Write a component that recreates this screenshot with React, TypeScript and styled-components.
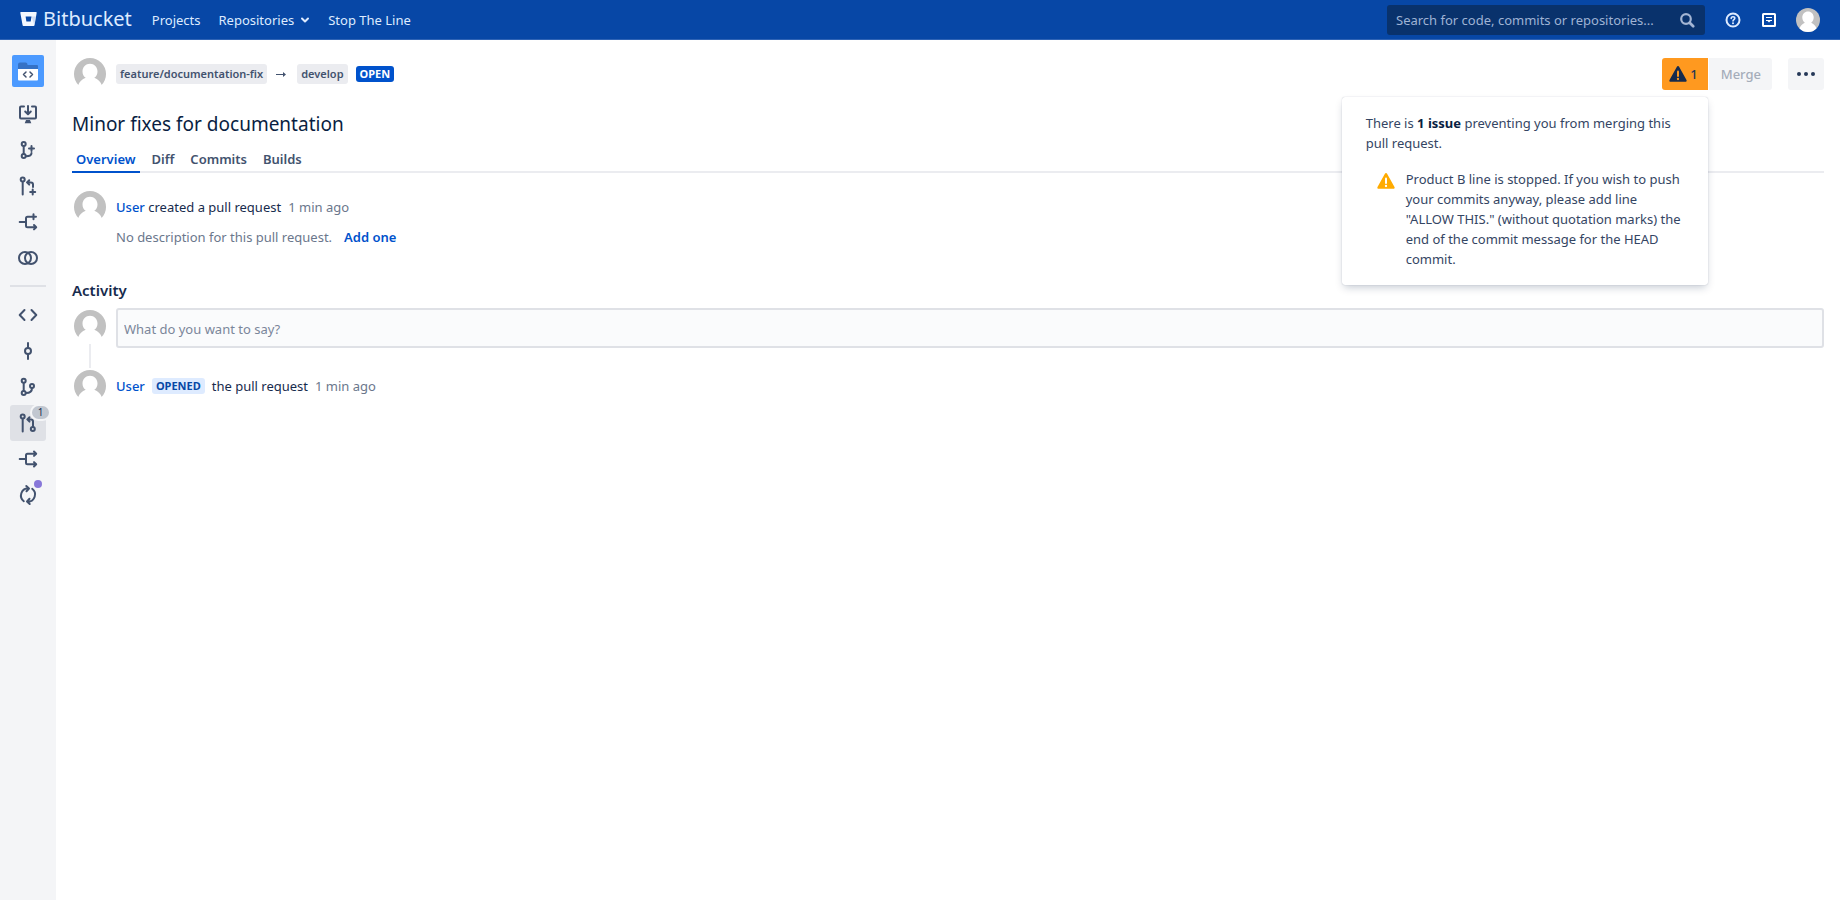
import React from "react";
import styled, { createGlobalStyle, css } from "styled-components";

const GlobalStyle = createGlobalStyle`
  *, *::before, *::after { box-sizing: border-box; }
  body {
    margin: 0;
    background: #ffffff;
    color: #172b4d;
    font-family: "Noto Sans", "Open Sans", sans-serif;
    font-size: 13px;
    line-height: 20px;
  }
  a { color: #0052cc; text-decoration: none; }
  h1, h2, p, ul { margin: 0; padding: 0; }
  ul { list-style: none; }
  button, input { font: inherit; color: inherit; }
  svg { display: block; flex: none; }
`;

/* ---------- App header ---------- */

const TopBar = styled.header`
  display: flex;
  align-items: center;
  height: 40px;
  padding: 0 20px;
  background: #0747a6;
  border-bottom: 1px solid #2e63b5;
  color: #deebff;
`;

const Brand = styled.a`
  display: flex;
  align-items: center;
  gap: 6px;
  margin-right: 20px;
  padding-bottom: 2px;
  color: #deebff;
  font-size: 20px;
  line-height: 24px;
`;

const TopNav = styled.nav`
  display: flex;
  flex: 1;
  align-items: center;
  gap: 18px;
`;

const TopLink = styled.a`
  display: flex;
  align-items: center;
  gap: 6px;
  color: #deebff;
`;

const SearchForm = styled.form`
  display: flex;
  align-items: center;
  width: 318px;
  height: 30px;
  padding: 0 9px;
  border-radius: 3px;
  background: #09326c;
`;

const SearchInput = styled.input`
  flex: 1;
  min-width: 0;
  padding: 0;
  border: 0;
  outline: 0;
  background: transparent;
  &::placeholder { color: #9fb3d4; opacity: 1; }
`;

const IconButton = styled.button`
  display: flex;
  align-items: center;
  justify-content: center;
  padding: 0;
  border: 0;
  background: transparent;
  cursor: pointer;
`;

const Tools = styled.div`
  display: flex;
  align-items: center;
  gap: 12px;
  margin-left: 16px;
`;

const AccountButton = styled(IconButton)`
  margin-left: 3px;
`;

/* ---------- Sidebar ---------- */

const Shell = styled.div`
  display: flex;
  min-height: calc(100vh - 40px);
`;

const Sidebar = styled.nav`
  display: flex;
  flex: none;
  flex-direction: column;
  align-items: center;
  width: 56px;
  padding-top: 15px;
  background: #f4f5f7;
`;

const ProjectTile = styled.a`
  display: flex;
  margin-bottom: 9px;
  border-radius: 2px;
  overflow: hidden;
`;

const SideLink = styled.a<{ $selected?: boolean }>`
  position: relative;
  display: flex;
  align-items: center;
  justify-content: center;
  width: 36px;
  height: 36px;
  border-radius: 3px;
  color: #42526e;
  ${({ $selected }) => $selected && css`background: #dfe1e6;`}
`;

const SideDivider = styled.hr`
  width: 36px;
  height: 2px;
  margin: 9px 0 10px;
  border: 0;
  background: #dfe1e6;
`;

const CountBadge = styled.span`
  position: absolute;
  top: -1px;
  right: -5px;
  width: 21px;
  height: 17px;
  border: 2px solid #f4f5f7;
  border-radius: 9px;
  background: #c1c7d0;
  color: #172b4d;
  font-size: 10px;
  line-height: 13px;
  text-align: center;
`;

const NewDot = styled.span`
  position: absolute;
  top: 3px;
  right: 4px;
  width: 8px;
  height: 8px;
  border-radius: 50%;
  background: #8777d9;
`;

/* ---------- Pull request ---------- */

const Main = styled.main`
  flex: 1;
  min-width: 0;
  padding: 18px 16px 24px;
`;

const PullRequestBar = styled.div`
  display: flex;
  align-items: center;
  gap: 8px;
  padding-left: 2px;
`;

const Branch = styled.a`
  margin-left: 2px;
  padding: 0 4px;
  border-radius: 3px;
  background: #ebecf0;
  color: #42526e;
  font-size: 11px;
  font-weight: 600;
`;

const Lozenge = styled.span<{ $subtle?: boolean }>`
  padding: 0 4px;
  border-radius: 3px;
  background: ${({ $subtle }) => ($subtle ? "#deebff" : "#0052cc")};
  color: ${({ $subtle }) => ($subtle ? "#0747a6" : "#ffffff")};
  font-size: 11px;
  font-weight: 700;
  line-height: 16px;
`;

const Actions = styled.div`
  display: flex;
  gap: 1px;
  margin-left: auto;
`;

const ActionButton = styled.button<{ $warning?: boolean }>`
  display: flex;
  align-items: center;
  gap: 2px;
  height: 32px;
  padding: 0 ${({ $warning }) => ($warning ? 10 : 11)}px 0 ${({ $warning }) => ($warning ? 6 : 12)}px;
  border: 0;
  border-radius: ${({ $warning }) => ($warning ? "3px 0 0 3px" : "3px")};
  background: ${({ $warning }) => ($warning ? "#ff991f" : "#f4f5f7")};
  color: #253858;
  font-weight: 500;
  &:disabled { border-radius: 0 3px 3px 0; color: #a5adba; }
`;

const MoreButton = styled(ActionButton)`
  justify-content: center;
  width: 36px;
  margin-left: 15px;
  padding: 0;
`;

const VetoAnchor = styled.div`
  position: relative;
`;

const VetoPopover = styled.div`
  position: absolute;
  top: calc(100% + 7px);
  right: 0;
  z-index: 2;
  width: 366px;
  padding: 16px 20px 16px 24px;
  border-radius: 3px;
  background: #ffffff;
  box-shadow: 0 4px 8px -2px rgba(9, 30, 66, 0.25), 0 0 1px rgba(9, 30, 66, 0.31);
  color: #344563;
  strong { color: #091e42; font-weight: 700; }
`;

const VetoItem = styled.li`
  display: flex;
  gap: 10px;
  margin-top: 16px;
  padding-left: 10px;
  svg { margin-top: 2px; }
`;

const Title = styled.h1`
  margin-top: 22px;
  font-size: 19px;
  font-weight: 400;
  line-height: 24px;
  color: #091e42;
`;

const Tabs = styled.nav`
  display: flex;
  gap: 8px;
  margin-top: 13px;
  border-bottom: 2px solid #ebecf0;
`;

const Tab = styled.a<{ $active?: boolean }>`
  margin-bottom: -2px;
  padding: 0 4px 2px;
  border-bottom: 2px solid ${({ $active }) => ($active ? "#0052cc" : "transparent")};
  color: ${({ $active }) => ($active ? "#0052cc" : "#42526e")};
  font-weight: 600;
`;

const Entry = styled.div`
  display: flex;
  align-items: center;
  gap: 10px;
  padding-left: 2px;
`;

const Created = styled(Entry)`
  margin-top: 18px;
`;

const EntryText = styled.p`
  display: flex;
  flex-wrap: wrap;
  align-items: center;
  gap: 7px;
`;

const UserLink = styled.a`
  font-weight: 500;
`;

const Muted = styled.span`
  color: #6b778c;
`;

const Description = styled.p`
  display: flex;
  gap: 12px;
  margin: 4px 0 0 44px;
  a { font-weight: 600; }
`;

const SectionTitle = styled.h2`
  margin: 33px 0 8px;
  font-size: 15px;
  font-weight: 600;
  line-height: 20px;
`;

const CommentInput = styled.input`
  flex: 1;
  min-width: 0;
  height: 40px;
  padding: 2px 6px 0;
  border: 2px solid #dfe1e6;
  border-radius: 3px;
  background: #fafbfc;
  &::placeholder { color: #7a869a; opacity: 1; }
`;

const CommentEntry = styled(Entry)`
  align-items: flex-start;
`;

const AvatarThread = styled.div`
  display: flex;
  flex-direction: column;
  align-items: center;
  gap: 2px;
  padding-top: 2px;
  margin-bottom: 2px;
  &::after { content: ""; width: 2px; height: 24px; background: #ebecf0; }
`;

/* ---------- Drawings ---------- */

const Avatar = ({ size = 32, filled = false }: { size?: number; filled?: boolean }) => (
  <svg width={size} height={size} viewBox="0 0 32 32" role="img" aria-label="User">
    <circle cx="16" cy="16" r="16" fill="#c1c1c1" />
    <path
      fill="#ffffff"
      d={
        filled
          ? "M16 4.500c-4.300 0-7.600 3.500-7.600 8 0 3 1.300 5.600 3.400 7C8.500 20.800 6 23.500 4.700 27.300A16 16 0 0 0 27.300 27.300C26 23.500 23.500 20.800 20.200 19.500c2.100-1.400 3.400-4 3.400-7 0-4.500-3.300-8-7.600-8z"
          : "M16 5.800c-4.200 0-7.500 3.400-7.500 7.600 0 2.800 1.200 5 3.200 6.300C8 21 5.500 23.500 4 27.500V33h24v-5.500c-1.500-4-4-6.500-7.700-7.800 2-1.300 3.200-3.500 3.200-6.300 0-4.200-3.300-7.600-7.500-7.600z"
      }
    />
  </svg>
);

const Glyph = ({ children }: { children: React.ReactNode }) => (
  <svg width="24" height="24" viewBox="0 0 24 24" fill="none" stroke="currentColor" strokeWidth="2" strokeLinecap="round" strokeLinejoin="round" aria-hidden="true">
    {children}
  </svg>
);

const WarningTriangle = ({ fill, mark }: { fill: string; mark: string }) => (
  <svg width="20" height="20" viewBox="0 0 20 20" aria-hidden="true">
    <path d="M8.900 2.700a1.250 1.250 0 0 1 2.200 0l7.400 13.300c.5.900-.1 1.800-1 1.800H2.500c-.9 0-1.500-.9-1-1.800z" fill={fill} />
    <path d="M10 7.500v4.500" stroke={mark} strokeWidth="2" strokeLinecap="round" />
    <circle cx="10" cy="15" r="1.150" fill={mark} />
  </svg>
);

const createLinks = [
  { label: "Clone", icon: <><path d="M8 4.500H5a1 1 0 0 0-1 1v10a1 1 0 0 0 1 1h14a1 1 0 0 0 1-1v-10a1 1 0 0 0-1-1h-3M12 4v8M9.200 9.500L12 12.300l2.800-2.800" /><path d="M10 18h4l1.300 3.200H8.700z" fill="currentColor" stroke="none" /></> },
  { label: "Create branch", icon: <><circle cx="7.700" cy="6" r="2" /><circle cx="7.700" cy="18" r="2" /><path d="M7.700 8v8M10 18.200c4 0 5.500-1 5.500-3.200M15.500 8v5M13 10.500h5" /></> },
  { label: "Create pull request", icon: <><circle cx="6.700" cy="5.500" r="2" /><path d="M6.700 8v12.500M13.200 6.200L11 8.400l2.200 2.200M11.500 8.400H15c1.500 0 2 .7 2 2V13M16.700 15.500v5M14.200 18h5" /></> },
  { label: "Create fork", icon: <><path d="M3.700 12H10M14 6.700h-2.500A1.500 1.500 0 0 0 10 8.200v7.500a1.500 1.500 0 0 0 1.500 1.500h8.500M18 15l2.200 2.200L18 19.400M17.500 4.300v5M15 6.800h5" /></> },
  { label: "Compare", icon: <><circle cx="9" cy="12" r="6" /><circle cx="15" cy="12" r="6" /></> },
];

const browseLinks = [
  { label: "Source", icon: <path d="M8.500 7l-4.800 5 4.800 5M15.500 7l4.800 5-4.800 5" /> },
  { label: "Commits", icon: <><circle cx="12" cy="12" r="3" /><path d="M12 4v5M12 15v5" /></> },
  { label: "Branches", icon: <><circle cx="7.700" cy="5.700" r="2" /><circle cx="7.700" cy="18" r="2" /><circle cx="16" cy="11" r="2" /><path d="M7.700 8v8M16 13c0 3.500-2 5-6 5" /></> },
  { label: "Pull requests", count: 1, icon: <><circle cx="6.700" cy="5.500" r="2" /><circle cx="16.800" cy="18" r="2" /><path d="M6.700 8v12.500M13.500 6.200l-2.200 2.200 2.200 2.200M11.700 8.400H15c1.500 0 2 .7 2 2V16" /></> },
  { label: "Forks", icon: <path d="M3.700 12H10M20 6.700h-8.500A1.500 1.500 0 0 0 10 8.200v7.600a1.500 1.500 0 0 0 1.500 1.500H20M18 4.500l2.200 2.200L18 8.900M18 15.100l2.200 2.200-2.200 2.200" /> },
  { label: "Builds", dot: true, icon: <path d="M7.800 18.200A7.200 7.200 0 0 1 12 5.300M10.300 3l2.700 2.500-2.500 2.700M16.200 5.800A7.200 7.200 0 0 1 12 18.700M13.700 21L11 18.500l2.500-2.700" /> },
];

export default function App() {
  return (
    <>
      <GlobalStyle />
      <TopBar>
        <Brand href="#">
          <svg width="17" height="16" viewBox="0 0 17 16" aria-hidden="true">
            <path d="M1 1h15a.7.7 0 0 1 .7.8l-2.200 12.400a.9.9 0 0 1-.9.800H3.500a.9.9 0 0 1-.9-.8L.3 1.800A.7.7 0 0 1 1 1z" fill="#f4f8ff" />
            <path d="M5.600 5.500h5.900l-.8 5H6.400z" fill="#0747a6" />
            <path d="M11.500 5.500h4.400l-1.500 8.500z" fill="#a9c2ea" opacity=".5" />
          </svg>
          Bitbucket
        </Brand>
        <TopNav aria-label="Main">
          <TopLink href="#">Projects</TopLink>
          <TopLink href="#">
            Repositories
            <svg width="10" height="8" viewBox="0 0 10 8" fill="none" stroke="currentColor" strokeWidth="2" strokeLinecap="round" strokeLinejoin="round" aria-hidden="true">
              <path d="M2 2.500l3 3 3-3" />
            </svg>
          </TopLink>
          <TopLink href="#">Stop The Line</TopLink>
        </TopNav>
        <SearchForm role="search">
          <SearchInput type="text" aria-label="Search" placeholder="Search for code, commits or repositories..." />
          <IconButton type="button" aria-label="Submit search">
            <svg width="18" height="18" viewBox="0 0 18 18" fill="none" stroke="#a3b5d3" aria-hidden="true">
              <circle cx="8" cy="8" r="4.800" strokeWidth="2.200" />
              <path d="M11.700 11.700l3.500 3.500" strokeWidth="2.800" strokeLinecap="round" />
            </svg>
          </IconButton>
        </SearchForm>
        <Tools>
          <IconButton type="button" aria-label="Help">
            <svg width="24" height="24" viewBox="0 0 24 24" fill="none" stroke="#deebff" aria-hidden="true">
              <circle cx="12" cy="12" r="6.500" strokeWidth="2" />
              <path d="M10.200 10.500c0-1.100.8-1.800 1.800-1.800s1.800.7 1.800 1.600c0 1.200-1.800 1.300-1.800 2.600" strokeWidth="1.600" strokeLinecap="round" />
              <circle cx="12" cy="15.200" r="1" fill="#deebff" stroke="none" />
            </svg>
          </IconButton>
          <IconButton type="button" aria-label="Feedback">
            <svg width="24" height="24" viewBox="0 0 24 24" fill="none" stroke="#ffffff" aria-hidden="true">
              <rect x="6" y="6" width="12" height="12" rx=".5" strokeWidth="2" />
              <path d="M9 9.500h6M9 12.500h6" strokeWidth="1" />
              <path d="M10.500 13h3L12 14.500z" fill="#ffffff" stroke="none" />
            </svg>
          </IconButton>
          <AccountButton type="button" aria-label="Your account">
            <Avatar size={24} filled />
          </AccountButton>
        </Tools>
      </TopBar>

      <Shell>
        <Sidebar aria-label="Repository">
          <ProjectTile href="#" aria-label="Repository home">
            <svg width="32" height="32" viewBox="0 0 32 32" aria-hidden="true">
              <rect width="32" height="32" fill="#4c9aff" />
              <path d="M6 9.500a2 2 0 0 1 2-2h5.500a2 2 0 0 1 2 2v.5H25a1 1 0 0 1 1 1v4H6z" fill="#3572c6" />
              <path d="M6 14h20v10.500a1 1 0 0 1-1 1H7a1 1 0 0 1-1-1z" fill="#ffffff" />
              <path d="M14 17l-2.500 2.500L14 22M18 17l2.500 2.500L18 22" fill="none" stroke="#42526e" strokeWidth="1.500" strokeLinecap="round" strokeLinejoin="round" />
            </svg>
          </ProjectTile>
          {createLinks.map((l) => (
            <SideLink key={l.label} href="#" aria-label={l.label}>
              <Glyph>{l.icon}</Glyph>
            </SideLink>
          ))}
          <SideDivider />
          {browseLinks.map((l) => (
            <SideLink key={l.label} href="#" aria-label={l.label} $selected={!!l.count}>
              <Glyph>{l.icon}</Glyph>
              {l.count && <CountBadge>{l.count}</CountBadge>}
              {l.dot && <NewDot />}
            </SideLink>
          ))}
        </Sidebar>

        <Main>
          <PullRequestBar>
            <Avatar />
            <Branch href="#">feature/documentation-fix</Branch>
            <svg width="12" height="12" viewBox="0 0 12 12" fill="none" stroke="#42526e" aria-hidden="true">
              <path d="M1 6.500h9" />
              <path d="M8 4L11 6.500 8 9z" fill="#42526e" stroke="none" />
            </svg>
            <Branch href="#">develop</Branch>
            <Lozenge>OPEN</Lozenge>
            <Actions>
              <VetoAnchor>
                <ActionButton type="button" $warning aria-label="1 merge issue" aria-expanded="true">
                  <WarningTriangle fill="#172b4d" mark="#ff991f" />1
                </ActionButton>
                <VetoPopover role="dialog" aria-label="Merge issues">
                  <p>There is <strong>1 issue</strong> preventing you from merging this pull request.</p>
                  <ul>
                    <VetoItem>
                      <WarningTriangle fill="#ffab00" mark="#ffffff" />
                      <p>
                        Product B line is stopped. If you wish to push your commits anyway, please add line
                        "ALLOW THIS." (without quotation marks) the end of the commit message for the HEAD commit.
                      </p>
                    </VetoItem>
                  </ul>
                </VetoPopover>
              </VetoAnchor>
              <ActionButton type="button" disabled>Merge</ActionButton>
              <MoreButton type="button" aria-label="More actions">
                <svg width="20" height="6" viewBox="0 0 20 6" fill="#253858" aria-hidden="true">
                  <circle cx="3" cy="3" r="2" />
                  <circle cx="10" cy="3" r="2" />
                  <circle cx="17" cy="3" r="2" />
                </svg>
              </MoreButton>
            </Actions>
          </PullRequestBar>

          <Title>Minor fixes for documentation</Title>
          <Tabs aria-label="Pull request">
            <Tab href="#" $active>Overview</Tab>
            <Tab href="#">Diff</Tab>
            <Tab href="#">Commits</Tab>
            <Tab href="#">Builds</Tab>
          </Tabs>

          <Created>
            <Avatar />
            <EntryText>
              <span><UserLink href="#">User</UserLink> created a pull request</span>
              <Muted>1 min ago</Muted>
            </EntryText>
          </Created>
          <Description>
            <Muted>No description for this pull request.</Muted>
            <a href="#">Add one</a>
          </Description>

          <SectionTitle>Activity</SectionTitle>
          <CommentEntry>
            <AvatarThread><Avatar /></AvatarThread>
            <CommentInput type="text" aria-label="Comment" placeholder="What do you want to say?" />
          </CommentEntry>
          <Entry>
            <Avatar />
            <EntryText>
              <UserLink href="#">User</UserLink>
              <Lozenge $subtle>OPENED</Lozenge>
              <span>the pull request</span>
              <Muted>1 min ago</Muted>
            </EntryText>
          </Entry>
        </Main>
      </Shell>
    </>
  );
}
